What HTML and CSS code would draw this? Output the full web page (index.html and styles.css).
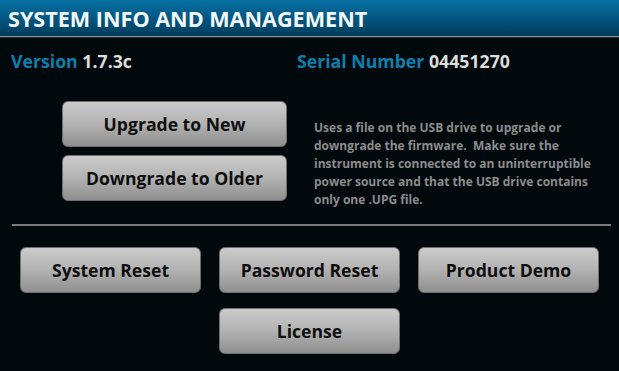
FILE: index.html
```html
<!DOCTYPE html>
<html>
<head>
<meta charset="utf-8">
<link rel="stylesheet" href="styles.css">
</head>
<body>
<div class="header"><h1 class="title">SYSTEM INFO AND MANAGEMENT</h1></div>
<div class="info">
  <div class="field version"><span class="label">Version</span> <span class="value">1.7.3c</span></div>
  <div class="field serial"><span class="label">Serial Number</span> <span class="value">04451270</span></div>
</div>
<div class="upgrade">
  <div class="upbtns">
    <button class="btn wide">Upgrade to New</button>
    <button class="btn wide">Downgrade to Older</button>
  </div>
  <p class="desc">Uses a file on the USB drive to upgrade or downgrade the firmware.&nbsp; Make sure the instrument is connected to an uninterruptible power source and that the USB drive contains only one .UPG file.</p>
</div>
<div class="sep"></div>
<div class="grid">
  <button class="btn">System Reset</button>
  <button class="btn">Password Reset</button>
  <button class="btn">Product Demo</button>
  <button class="btn lic">License</button>
</div>
</body>
</html>
```
FILE: styles.css
```css
html, body {
  margin: 0;
  padding: 0;
  background: #02090d;
  width: 619px;
  height: 371px;
  overflow: hidden;
  font-family: "Open Sans", "DejaVu Sans", sans-serif;
}
.header {
  height: 36px;
  background: linear-gradient(to bottom, #0770a3 0%, #035a86 45%, #013d5c 100%);
  border-bottom: 1px solid #7f9099;
  box-shadow: 0 1px 0 #2a3338;
  display: flex;
  align-items: center;
  padding-left: 8px;
}
.title {
  margin: 0;
  color: #f4f8fa;
  font-size: 21.6px;
  font-weight: 700;
  letter-spacing: 0;
  line-height: 1;
  padding-top: 1px;
}
.info {
  display: flex;
  padding: 12px 0 0 11px;
  height: 36px;
  box-sizing: border-box;
  margin-top: 1px;
}
.field {
  font-size: 17.7px;
  font-weight: 700;
  line-height: 22px;
}
.version { width: 286px; }
.label { color: #0c80ac; }
.value { color: #dcdcdc; }
.upgrade {
  display: flex;
  padding: 27px 0 0 62px;
}
.upbtns {
  display: flex;
  flex-direction: column;
  gap: 8px;
  width: 225px;
}
.btn {
  display: block;
  height: 46px;
  border: 1px solid #6f6f6f;
  border-radius: 6px;
  background: linear-gradient(to bottom, #cbcbcb 0%, #b2b2b2 50%, #8f8f8f 100%);
  color: #0e0e0e;
  font-family: "Open Sans", "DejaVu Sans", sans-serif;
  font-weight: 700;
  font-size: 17.6px;
  padding: 0;
  box-sizing: border-box;
}
.wide { width: 225px; }
.desc {
  margin: 18px 0 0 27px;
  width: 290px;
  color: #8c8c8c;
  font-size: 12px;
  font-weight: 700;
  line-height: 18px;
}
.sep {
  margin: 15px 8px 0 12px;
  height: 2px;
  background: #7a7a7a;
}
.grid {
  display: grid;
  grid-template-columns: 181px 181px 181px;
  column-gap: 18px;
  row-gap: 15px;
  padding: 21px 0 0 20px;
}
.grid .btn { width: 181px; }
.lic { grid-column: 2; }
```
